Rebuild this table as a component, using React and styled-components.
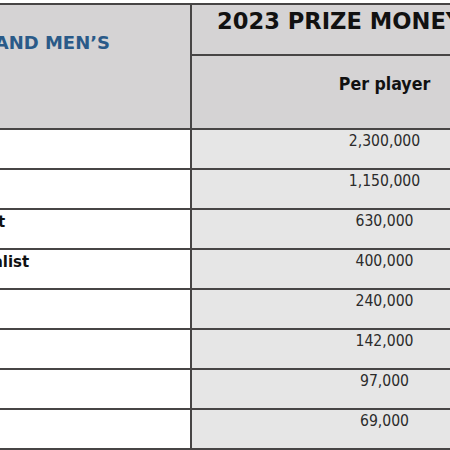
import React from 'react'
import styled, { createGlobalStyle } from 'styled-components'

const GlobalStyle = createGlobalStyle`
  html, body {
    margin: 0;
    padding: 0;
    background: #ffffff;
    overflow: hidden;
  }
`

const Viewport = styled.div`
  width: 450px;
  height: 450px;
  overflow: hidden;
  padding-top: 3px;
  box-sizing: border-box;
  font-family: "DejaVu Sans", Verdana, sans-serif;
`

const Sheet = styled.div`
  display: grid;
  grid-template-columns: 475px 385px 300px;
  grid-template-rows: 49px 72px repeat(8, 38px);
  gap: 2px;
  padding: 2px;
  width: max-content;
  margin-left: -287px;
  background: #474545;
`

const GroupHead = styled.div`
  grid-row: 1 / span 2;
  background: #d5d3d4;
  color: #2a5a88;
  font-weight: bold;
  font-size: 18px;
  line-height: 22px;
  text-align: right;
  padding: 27px 80px 0 0;
  white-space: nowrap;
`

const TitleHead = styled.div`
  grid-column: 2 / span 2;
  background: #d5d3d4;
  color: #111;
  font-weight: bold;
  font-size: 22.6px;
  line-height: 26px;
  padding: 3px 0 0 25px;
  white-space: nowrap;
  overflow: hidden;
`

const SubHead = styled.div`
  background: #d5d3d4;
  color: #111;
  font-family: "DejaVu Sans Condensed", "DejaVu Sans", sans-serif;
  font-weight: bold;
  font-size: 17.6px;
  line-height: 21px;
  text-align: center;
  padding-top: 18px;
`

const LabelCell = styled.div`
  background: #ffffff;
  color: #111;
  font-weight: bold;
  font-size: 15px;
  line-height: 20px;
  padding: 2px 0 0 184px;
  white-space: nowrap;
`

const AmountCell = styled.div`
  background: #e6e6e6;
  color: #2b2b2b;
  font-family: "DejaVu Sans Condensed", "DejaVu Sans", sans-serif;
  font-size: 15.6px;
  line-height: 18px;
  text-align: center;
  padding-top: 2px;
`

const rows = [
  ['Winner', '2,300,000'],
  ['Finalist', '1,150,000'],
  ['Semi-finalist', '630,000'],
  ['Quarter-finalist', '400,000'],
  ['4th round', '240,000'],
  ['3rd round', '142,000'],
  ['2nd round', '97,000'],
  ['1st round', '69,000'],
]

export default function App() {
  return (
    <Viewport>
      <GlobalStyle />
      <Sheet>
        <GroupHead>WOMEN’S AND MEN’S</GroupHead>
        <TitleHead>2023 PRIZE MONEY</TitleHead>
        <SubHead>Per player</SubHead>
        <SubHead>Total</SubHead>
        {rows.map(([label, amount]) => (
          <React.Fragment key={label}>
            <LabelCell>{label}</LabelCell>
            <AmountCell>{amount}</AmountCell>
            <AmountCell>&nbsp;</AmountCell>
          </React.Fragment>
        ))}
      </Sheet>
    </Viewport>
  )
}
